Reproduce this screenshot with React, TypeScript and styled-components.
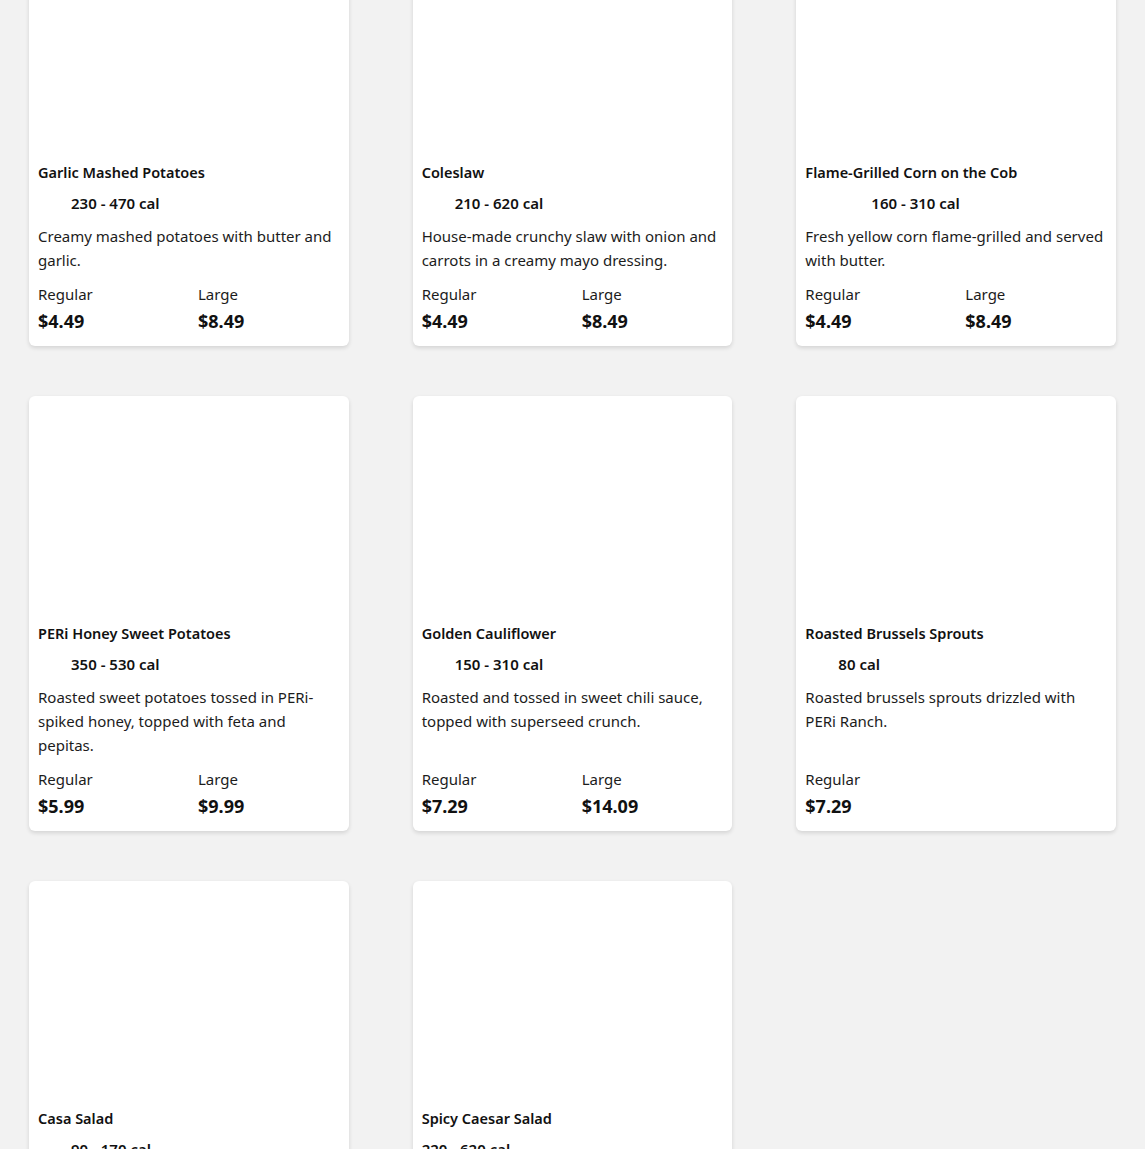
import React from "react";
import styled, { createGlobalStyle } from "styled-components";

const GlobalStyle = createGlobalStyle`
  html, body {
    margin: 0;
    padding: 0;
    background: #f2f2f2;
    font-family: "Noto Sans", "Open Sans", sans-serif;
    color: #111;
  }
  * { box-sizing: border-box; }
`;

const Grid = styled.div`
  display: grid;
  grid-template-columns: repeat(3, minmax(0, 1fr));
  column-gap: 64px;
  row-gap: 50px;
  padding: 0 29px 40px;
  margin-top: -65px;
`;

const Card = styled.article`
  background: #fff;
  border-radius: 6px;
  box-shadow: 0 2px 4px rgba(0, 0, 0, 0.13);
  display: flex;
  flex-direction: column;
  padding: 0 9px 12px;
  min-width: 0;
  overflow: hidden;
`;

const ImageArea = styled.div`
  height: 226px;
`;

const Title = styled.h3`
  margin: 0;
  font-size: 14.5px;
  line-height: 22px;
  font-weight: 600;
  color: #111;
`;

const CalRow = styled.div`
  display: flex;
  align-items: center;
  margin-top: 9px;
  font-size: 15px;
  line-height: 22px;
  font-weight: 600;
`;

const BadgeSlot = styled.span`
  width: 24px;
  height: 22px;
  margin-right: 9px;
  flex: none;
`;

const Desc = styled.p`
  margin: 10px 0 0;
  font-size: 15px;
  line-height: 24px;
  color: #1c1c1c;
`;

const Prices = styled.div`
  display: flex;
  margin-top: auto;
  padding-top: 11px;
`;

const PriceItem = styled.div`
  flex: 0 0 160px;
  display: flex;
  flex-direction: column;
`;

const Size = styled.span`
  font-size: 15px;
  line-height: 22px;
  color: #1c1c1c;
`;

const Amount = styled.span`
  margin-top: 3px;
  font-size: 18px;
  line-height: 26px;
  font-weight: 700;
  color: #111;
`;

type Item = {
  name: string;
  cal: string;
  badges: number;
  desc: string;
  prices: [string, string][];
};

const items: Item[] = [
  {
    name: "Garlic Mashed Potatoes",
    cal: "230 - 470 cal",
    badges: 1,
    desc: "Creamy mashed potatoes with butter and garlic.",
    prices: [["Regular", "$4.49"], ["Large", "$8.49"]],
  },
  {
    name: "Coleslaw",
    cal: "210 - 620 cal",
    badges: 1,
    desc: "House-made crunchy slaw with onion and carrots in a creamy mayo dressing.",
    prices: [["Regular", "$4.49"], ["Large", "$8.49"]],
  },
  {
    name: "Flame-Grilled Corn on the Cob",
    cal: "160 - 310 cal",
    badges: 2,
    desc: "Fresh yellow corn flame-grilled and served with butter.",
    prices: [["Regular", "$4.49"], ["Large", "$8.49"]],
  },
  {
    name: "PERi Honey Sweet Potatoes",
    cal: "350 - 530 cal",
    badges: 1,
    desc: "Roasted sweet potatoes tossed in PERi-spiked honey, topped with feta and pepitas.",
    prices: [["Regular", "$5.99"], ["Large", "$9.99"]],
  },
  {
    name: "Golden Cauliflower",
    cal: "150 - 310 cal",
    badges: 1,
    desc: "Roasted and tossed in sweet chili sauce, topped with superseed crunch.",
    prices: [["Regular", "$7.29"], ["Large", "$14.09"]],
  },
  {
    name: "Roasted Brussels Sprouts",
    cal: "80 cal",
    badges: 1,
    desc: "Roasted brussels sprouts drizzled with PERi Ranch.",
    prices: [["Regular", "$7.29"]],
  },
  {
    name: "Casa Salad",
    cal: "90 - 170 cal",
    badges: 1,
    desc: "Mixed greens, cucumbers, tomatoes and red onion with house dressing.",
    prices: [["Regular", "$5.49"], ["Large", "$9.49"]],
  },
  {
    name: "Spicy Caesar Salad",
    cal: "220 - 620 cal",
    badges: 0,
    desc: "Romaine, parmesan and croutons tossed in spicy Caesar dressing.",
    prices: [["Regular", "$5.49"], ["Large", "$9.49"]],
  },
];

export default function App() {
  return (
    <>
      <GlobalStyle />
      <Grid>
        {items.map((it) => (
          <Card key={it.name}>
            <ImageArea />
            <Title>{it.name}</Title>
            <CalRow>
              {Array.from({ length: it.badges }).map((_, i) => (
                <BadgeSlot key={i} />
              ))}
              <span>{it.cal}</span>
            </CalRow>
            <Desc>{it.desc}</Desc>
            <Prices>
              {it.prices.map(([s, p]) => (
                <PriceItem key={s}>
                  <Size>{s}</Size>
                  <Amount>{p}</Amount>
                </PriceItem>
              ))}
            </Prices>
          </Card>
        ))}
      </Grid>
    </>
  );
}
